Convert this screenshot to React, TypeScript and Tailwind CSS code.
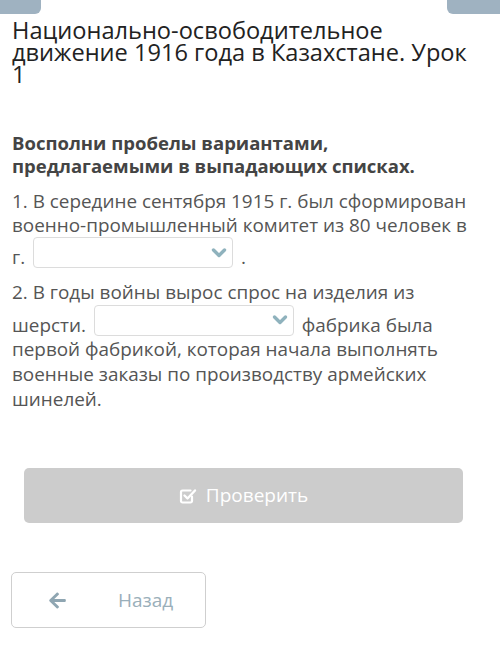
import React from "react";
import { FaArrowLeft } from "react-icons/fa";

function Chevron() {
  return (
    <svg width="16" height="12" viewBox="0 0 16 12" fill="none">
      <path d="M2.5 3l5.5 5.5L13.5 3" stroke="#8fb2bd" strokeWidth="3.4" strokeLinecap="round" strokeLinejoin="round" />
    </svg>
  );
}

function Select({ className = "" }: { className?: string }) {
  return (
    <span
      className={`inline-flex items-center justify-end align-[5px] w-[200px] h-[31px] border border-[#dcdcdc] rounded-[4px] bg-white pr-[5px] ${className}`}
    >
      <Chevron />
    </span>
  );
}

function CheckSquare() {
  return (
    <svg width="18" height="18" viewBox="0 0 18 18" fill="none">
      <path
        d="M13 9.5V14a1.5 1.5 0 0 1-1.5 1.5h-8A1.5 1.5 0 0 1 2 14V5a1.5 1.5 0 0 1 1.5-1.5h8"
        stroke="white"
        strokeWidth="2.2"
        strokeLinecap="round"
      />
      <path d="M5.5 8.5l3 3 7.5-8" stroke="white" strokeWidth="2.4" strokeLinecap="round" strokeLinejoin="round" />
    </svg>
  );
}

export default function App() {
  return (
    <div
      className="w-[500px] h-[665px] bg-white overflow-hidden"
      style={{ fontFamily: '"Open Sans", "Noto Sans", sans-serif' }}
    >
      <div className="flex justify-between h-[14px]">
        <div className="w-[41px] h-[14px] bg-[#9fb2c1] rounded-br-[6px]" />
        <div className="w-[53px] h-[14px] bg-[#9fb2c1] rounded-bl-[6px]" />
      </div>
      <div className="pl-[12px] pr-[30px]">
        <h1 className="mt-[5px] text-[23.6px] leading-[22px] text-[#222] font-normal">
          Национально-освободительное движение 1916 года в Казахстане. Урок 1
        </h1>
        <h2 className="mt-[46px] text-[18.5px] leading-[23px] font-bold text-[#444]">
          Восполни пробелы вариантами, предлагаемыми в выпадающих списках.
        </h2>
        <p className="mt-[12px] text-[18.9px] leading-[24px] text-[#555]">
          1. В середине сентября 1915 г. был сформирован военно-промышленный комитет из 80 человек в г.{" "}
          <Select className="mx-[3px]" /> .
        </p>
        <p className="mt-[11px] text-[18.9px] leading-[25px] text-[#555]">
          2. В годы войны вырос спрос на изделия из шерсти.{" "}
          <Select className="mx-[3px]" /> фабрика была первой фабрикой, которая начала выполнять военные заказы по
          производству армейских шинелей.
        </p>
      </div>
      <div className="mt-[56px] ml-[24px] w-[439px] h-[55px] bg-[#cccccc] rounded-[5px] flex items-center justify-center gap-[9px] text-white text-[19px]">
        <CheckSquare />
        <span>Проверить</span>
      </div>
      <div className="mt-[49px] ml-[11px] w-[195px] h-[56px] border border-[#cfcfcf] rounded-[5px] flex items-center">
        <FaArrowLeft className="ml-[36px] w-[19px] h-[19px] text-[#8fa6b2]" />
        <span className="ml-[51px] text-[19px] text-[#9aafba]">Назад</span>
      </div>
    </div>
  );
}
